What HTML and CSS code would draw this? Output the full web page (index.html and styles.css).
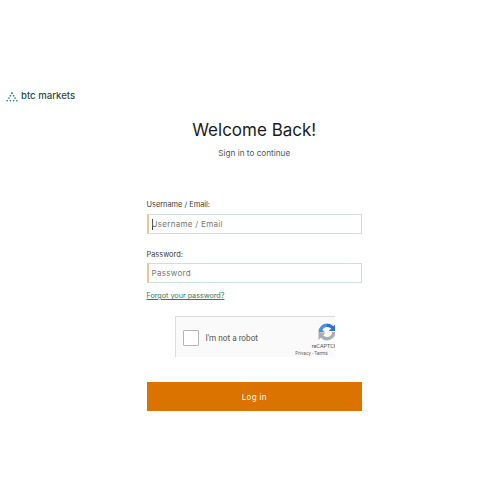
FILE: index.html
```html
<!DOCTYPE html>
<html lang="en">
<head>
<meta charset="utf-8">
<title>BTC Markets - Sign in</title>
<link rel="stylesheet" href="styles.css">
</head>
<body>
<header class="brand">
  <svg class="brand-mark" viewBox="0 0 12 10" width="12" height="10" aria-hidden="true">
    <g fill="#2f8f72">
      <rect x="5" y="0.300" width="1.800" height="1.800"/>
      <rect x="3.600" y="2.900" width="1.600" height="1.600"/>
      <rect x="6.800" y="2.900" width="1.600" height="1.600"/>
      <rect x="2.200" y="5.400" width="1.500" height="1.500"/>
      <rect x="8.300" y="5.400" width="1.500" height="1.500"/>
      <rect x="0.400" y="7.900" width="1.500" height="1.500"/>
      <rect x="3.600" y="7.900" width="1.500" height="1.500"/>
      <rect x="6.900" y="7.900" width="1.500" height="1.500"/>
      <rect x="10.100" y="7.900" width="1.500" height="1.500"/>
    </g>
  </svg>
  <span class="brand-name">btc markets</span>
</header>
<main class="panel">
  <h1 class="title">Welcome Back!</h1>
  <p class="subtitle">Sign in to continue</p>
  <form class="form">
    <div class="field">
      <label class="label" for="user">Username / Email:</label>
      <div class="input active"><span class="caret"></span><span class="placeholder" id="user">Username / Email</span></div>
    </div>
    <div class="field second">
      <label class="label" for="pass">Password:</label>
      <div class="input"><span class="placeholder" id="pass">Password</span></div>
    </div>
    <a class="forgot" href="#">Forgot your password?</a>
    <div class="captcha-wrap">
      <div class="captcha">
        <span class="checkbox"></span>
        <span class="robot">I'm not a robot</span>
        <div class="badge">
          <svg class="badge-icon" viewBox="0 0 20 20" width="20" height="20" aria-hidden="true">
            <path d="M10 1.500a8.500 8.500 0 0 1 6.300 2.800L19 1.800V9h-7.200l2.400-2.400A5 5 0 0 0 10 5z" fill="#2f6fd8"/>
            <path d="M1.500 10A8.500 8.500 0 0 1 10 1.500V5a5 5 0 0 0-4.600 3L7.600 10z" fill="#4a90e2"/>
            <path d="M1.500 10v8l2.400-2.300A8.500 8.500 0 0 0 10 18.500a8.500 8.500 0 0 0 8.500-8.500H15a5 5 0 0 1-8.800 3.200L8.500 10.800z" fill="#a9adb3"/>
          </svg>
          <span class="badge-name">reCAPTCHA</span>
          <span class="badge-links">Privacy - Terms</span>
        </div>
      </div>
    </div>
    <button class="submit" type="button">Log in</button>
  </form>
</main>
</body>
</html>
```
FILE: styles.css
```css
* { box-sizing: border-box; }
html, body { margin: 0; padding: 0; }
body {
  width: 500px;
  height: 500px;
  overflow: hidden;
  background: #fff;
  font-family: Inter, "Liberation Sans", sans-serif;
  color: #222;
  padding-top: 90px;
}
.brand {
  display: flex;
  align-items: center;
  gap: 3px;
  height: 12px;
  padding-left: 6px;
}
.brand-mark { display: block; margin-top: 2px; }
.brand-name {
  font-size: 9.600px;
  font-weight: 500;
  line-height: 12px;
  color: #2b4a48;
}
.panel {
  width: 215.500px;
  margin: 16px 0 0 146.500px;
}
.title {
  margin: 0;
  text-align: center;
  font-size: 17px;
  font-weight: 400;
  line-height: 24px;
  color: #1b1b1f;
}
.subtitle {
  margin: 5px 0 0;
  text-align: center;
  font-size: 8.200px;
  line-height: 12px;
  color: #555;
}
.form { margin-top: 40px; display: flex; flex-direction: column; }
.label {
  display: block;
  font-size: 7.400px;
  line-height: 12px;
  color: #3a3a3a;
}
.field .input { margin-top: 3px; }
.second { margin-top: 15px; }
.second .input { margin-top: 2px; }
.input {
  display: flex;
  align-items: center;
  height: 20px;
  padding-left: 3px;
  background: #fff;
  border: 1px solid #cfe0dc;
  border-left: 2px solid #f0c58c;
}
.caret { width: 1px; height: 11px; background: #444; margin-right: -1px; }
.placeholder {
  font-size: 8px;
  letter-spacing: 0.300px;
  color: #777;
}
.forgot {
  margin-top: 7px;
  font-size: 7.200px;
  line-height: 12px;
  color: #2f7a64;
  text-decoration: underline;
}
.captcha-wrap { margin-top: 14px; margin-left: 28px; width: 160px; height: 41px; overflow: hidden; }
.captcha {
  position: relative;
  display: flex;
  align-items: center;
  width: 186px;
  height: 48px;
  background: #fafafa;
  border: 1px solid #dcdcdc;
  padding-left: 7px;
  padding-bottom: 5px;
}
.checkbox {
  width: 16px;
  height: 16px;
  background: #fff;
  border: 1px solid #b5b5b5;
  border-radius: 1px;
}
.robot {
  margin-left: 7px;
  font-family: Roboto, "Liberation Sans", sans-serif;
  font-size: 8.200px;
  color: #555;
}
.badge {
  position: absolute;
  left: 125px;
  top: 5px;
  width: 46px;
  display: flex;
  flex-direction: column;
  align-items: center;
}
.badge-icon { display: block; margin-left: 6px; }
.badge-name { font-family: Roboto, "Liberation Sans", sans-serif; font-size: 5.500px; line-height: 8px; color: #555; margin-left: 6px; }
.badge-links { font-family: Roboto, "Liberation Sans", sans-serif; font-size: 4.800px; line-height: 7px; color: #666; white-space: nowrap; margin-left: -24px; }
.submit {
  margin-top: 25px;
  height: 29px;
  background: #db7300;
  border: 0;
  color: #fff;
  font-family: Inter, "Liberation Sans", sans-serif;
  font-size: 8px;
  letter-spacing: 0.300px;
  padding: 0;
}
```
